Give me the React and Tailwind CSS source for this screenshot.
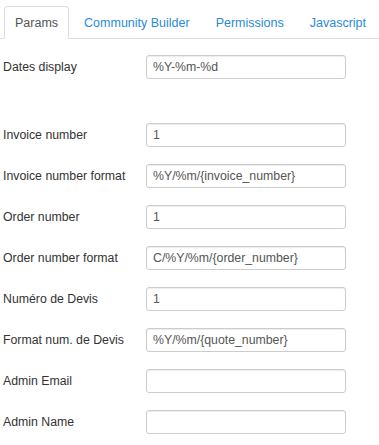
import React from "react";

const rows = [
  ["Invoice number", "1"],
  ["Invoice number format", "%Y/%m/{invoice_number}"],
  ["Order number", "1"],
  ["Order number format", "C/%Y/%m/{order_number}"],
  ["Numéro de Devis", "1"],
  ["Format num. de Devis", "%Y/%m/{quote_number}"],
  ["Admin Email", ""],
  ["Admin Name", ""],
];

function Row({ label, value }) {
  return (
    <div className="flex items-center h-[24px]">
      <label className="w-[143px] shrink-0 text-[#333] whitespace-nowrap">{label}</label>
      <input
        type="text"
        defaultValue={value}
        readOnly
        className="w-[200px] h-[24px] border border-[#ccc] rounded-[3px] px-[6px] text-[12.3px] text-[#555] bg-white shadow-[inset_0_1px_1px_rgba(0,0,0,0.075)] outline-none"
      />
    </div>
  );
}

export default function App() {
  return (
    <div className="w-[379px] h-[445px] bg-white font-['Liberation_Sans',Arial,sans-serif] text-[12.3px] leading-[18px] overflow-hidden">
      <ul className="flex mt-[6px] h-[33px] border-b border-[#ddd] pl-[4px] text-[12.5px] whitespace-nowrap">
        <li className="shrink-0 h-[33px] -mb-px flex items-center px-[10px] border border-[#ddd] border-b-white bg-white rounded-t-[4px] text-[#555] mr-[4px]">
          Params
        </li>
        <li className="shrink-0 h-[33px] flex items-center px-[10px] border border-transparent text-[#2a8bd6] mr-[4px]">
          Community Builder
        </li>
        <li className="shrink-0 h-[33px] flex items-center px-[10px] border border-transparent text-[#2a8bd6] mr-[4px]">
          Permissions
        </li>
        <li className="shrink-0 h-[33px] flex items-center px-[10px] border border-transparent text-[#2a8bd6]">
          Javascript
        </li>
      </ul>
      <div className="flex flex-col gap-[17px] pt-[16px] pl-[3px]">
        <Row label="Dates display" value="%Y-%m-%d" />
        <div className="h-[10px]" />
        {rows.map(([l, v]) => (
          <Row key={l} label={l} value={v} />
        ))}
      </div>
    </div>
  );
}
